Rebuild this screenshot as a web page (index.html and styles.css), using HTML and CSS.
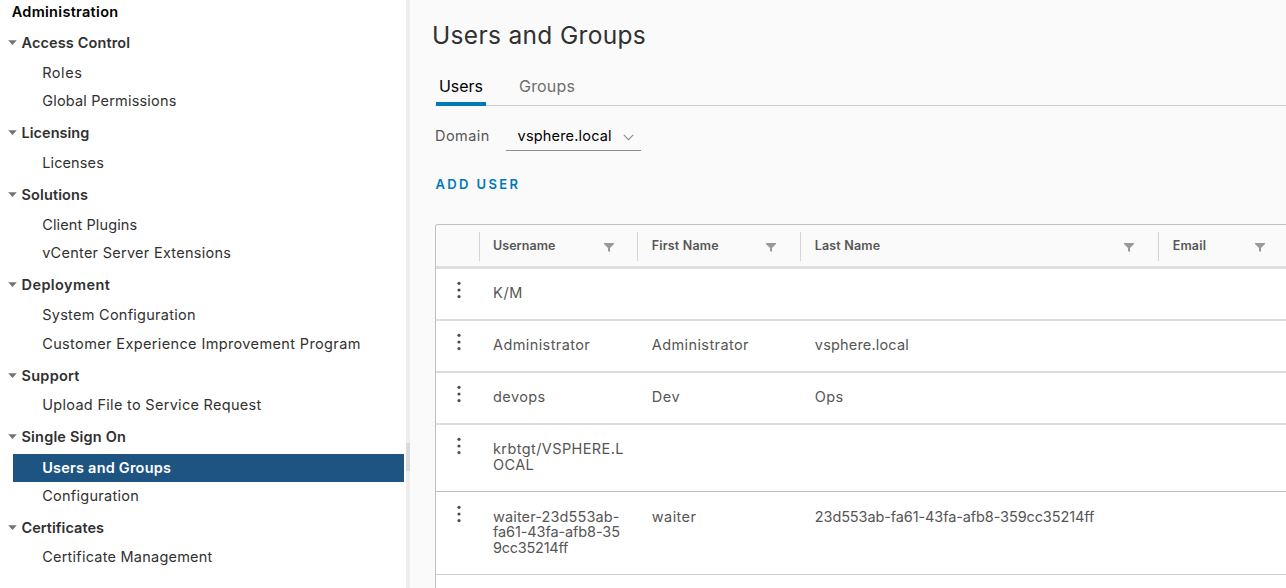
FILE: index.html
```html
<!DOCTYPE html>
<html lang="en">
<head>
<meta charset="utf-8">
<title>Users and Groups</title>
<link rel="stylesheet" href="styles.css">
</head>
<body>
<svg class="sprite" aria-hidden="true">
  <symbol id="caret" viewBox="0 0 9 5"><path d="M0.2 0.3h8.6L4.5 4.9z" fill="#737373"/></symbol>
  <symbol id="filter" viewBox="0 0 10 9"><path d="M0 0h10v1L6 5v4L4 8V5L0 1z" fill="#999"/></symbol>
  <symbol id="dots" viewBox="0 0 4 18"><g fill="#4d4d4d"><circle cx="2" cy="2.3" r="1.6"/><circle cx="2" cy="9" r="1.6"/><circle cx="2" cy="15.6" r="1.6"/></g></symbol>
</svg>
<div class="app">
  <nav class="sidebar">
    <div class="side-title">Administration</div>
    <div class="group"><svg class="caret"><use href="#caret"/></svg><span class="ls-12">Access Control</span></div>
    <a class="item ls-55">Roles</a>
    <a class="item ls-18">Global Permissions</a>
    <div class="group"><svg class="caret"><use href="#caret"/></svg><span class="ls-0">Licensing</span></div>
    <a class="item ls-12">Licenses</a>
    <div class="group"><svg class="caret"><use href="#caret"/></svg><span class="ls-12">Solutions</span></div>
    <a class="item ls-12">Client Plugins</a>
    <a class="item">vCenter Server Extensions</a>
    <div class="group"><svg class="caret"><use href="#caret"/></svg><span class="ls-42">Deployment</span></div>
    <a class="item">System Configuration</a>
    <a class="item ls-37">Customer Experience Improvement Program</a>
    <div class="group"><svg class="caret"><use href="#caret"/></svg><span>Support</span></div>
    <a class="item ls-30">Upload File to Service Request</a>
    <div class="group"><svg class="caret"><use href="#caret"/></svg><span class="ls-18">Single Sign On</span></div>
    <a class="item selected">Users and Groups</a>
    <a class="item">Configuration</a>
    <div class="group"><svg class="caret"><use href="#caret"/></svg><span class="ls-0">Certificates</span></div>
    <a class="item ls-23">Certificate Management</a>
  </nav>
  <div class="splitter"><div class="handle"></div></div>
  <main class="main">
    <h1 class="title">Users and Groups</h1>
    <div class="tabs"><a class="tab active">Users</a><a class="tab">Groups</a></div>
    <div class="domain">
      <label class="domain-label">Domain</label>
      <div class="select"><span class="value">vsphere.local</span>
        <svg class="chevron" viewBox="0 0 11 7"><path d="M0.8 0.8L5.5 5.6L10.2 0.8" fill="none" stroke="#8c8c8c" stroke-width="1.1"/></svg>
      </div>
    </div>
    <a class="add">ADD USER</a>
    <div class="grid">
      <div class="row head">
        <div></div>
        <div class="th first"><span class="label ls-5">Username</span><svg class="filter"><use href="#filter"/></svg></div>
        <div class="th"><span class="label">First Name</span><svg class="filter"><use href="#filter"/></svg></div>
        <div class="th"><span class="label">Last Name</span><svg class="filter"><use href="#filter"/></svg></div>
        <div class="th email"><span class="label">Email</span><svg class="filter"><use href="#filter"/></svg></div>
      </div>
      <div class="row">
        <svg class="dots"><use href="#dots"/></svg>
        <div class="td user ls-68">K/M</div><div class="td"></div><div class="td"></div><div class="td"></div>
      </div>
      <div class="row">
        <svg class="dots"><use href="#dots"/></svg>
        <div class="td user">Administrator</div><div class="td">Administrator</div><div class="td ls-18">vsphere.local</div><div class="td"></div>
      </div>
      <div class="row">
        <svg class="dots"><use href="#dots"/></svg>
        <div class="td user ls-42">devops</div><div class="td ls-55">Dev</div><div class="td">Ops</div><div class="td"></div>
      </div>
      <div class="row two-line">
        <svg class="dots"><use href="#dots"/></svg>
        <div class="td user">krbtgt/VSPHERE.L<br>OCAL</div><div class="td"></div><div class="td"></div><div class="td"></div>
      </div>
      <div class="row three-line">
        <svg class="dots"><use href="#dots"/></svg>
        <div class="td user"><span class="ls-12">waiter-23d553ab-</span><br><span class="tight">fa61-43fa-afb8-35</span><br><span class="tighter">9cc35214ff</span></div><div class="td ls-42">waiter</div><div class="td tight">23d553ab-fa61-43fa-afb8-359cc35214ff</div><div class="td"></div>
      </div>
      <div class="row last"></div>
    </div>
  </main>
</div>
</body>
</html>
```
FILE: styles.css
```css
* { box-sizing: border-box; }
body { margin: 0; font-family: Inter, "Liberation Sans", sans-serif; font-size: 14.5px; color: #313131; background: #fff; overflow: hidden; }
.sprite { display: block; width: 0; height: 0; }
.app { display: flex; width: 1286px; height: 588px; overflow: hidden; }

.sidebar { width: 406px; flex: none; letter-spacing: 0.27px; white-space: nowrap; }
.side-title { height: 25px; padding: 0 0 2px 11.7px; line-height: 23px; font-weight: 600; letter-spacing: 0.3px; color: #000; }
.group { display: flex; align-items: center; height: 33.1px; padding: 2.2px 0 0 7.5px; font-weight: 600; }
.caret { width: 9px; height: 5px; margin-right: 5px; }
.item { display: block; height: 28.6px; padding: 0.8px 0 0 42.2px; line-height: 28.6px; }
.selected { height: 28px; margin: 1.6px 2px -1px 12.6px; padding: 0 0 0 29.6px; line-height: 28px; background: #1d5481; color: #fff; font-weight: 600; letter-spacing: 0.22px; }

.splitter { width: 4px; flex: none; padding-top: 443px; background: #eee; }
.handle { height: 28px; background: #dadada; }

.main { flex: 1; min-width: 0; padding-left: 25px; background: #fafafa; }
.title { margin: 0; padding: 20px 0 0; margin-left: -3px; font-size: 24.5px; line-height: 30px; font-weight: 400; letter-spacing: 0.33px; color: #313131; }
.tabs { display: flex; gap: 30px; height: 56px; padding: 17px 0 0 1px; border-bottom: 1px solid #ccc; font-size: 16px; }
.tab { height: 39px; padding: 0 3px; line-height: 39px; letter-spacing: 0.19px; color: #6e6e6e; }
.active { width: 50px; letter-spacing: -0.05px; color: #000; border-bottom: 4px solid #0079b8; }
.domain { display: flex; align-items: flex-start; height: 45px; }
.domain-label { width: 71px; padding-top: 16px; line-height: 28px; letter-spacing: 0.45px; color: #565656; }
.select { display: flex; align-items: center; width: 135px; height: 29px; margin-top: 16px; padding-left: 11.6px; border-bottom: 1px solid #8c8c8c; letter-spacing: 0.18px; color: #000; }
.value { padding-bottom: 2px; }
.chevron { width: 11px; height: 7px; margin: 2px 0 0 11.4px; }
.add { display: block; height: 73px; padding: 17.5px 0 0 0.5px; font-size: 13px; line-height: 30px; font-weight: 600; letter-spacing: 2.36px; color: #0079b8; }

.grid { border: 1px solid #c0c0c0; border-width: 1px 0 0 1px; border-radius: 3px 0 0 0; background: #fff; overflow: hidden; }
.row { display: grid; grid-template-columns: 43px 158px 163px 358px 128px; height: 52px; border-bottom: 2px solid #dcdcdc; color: #565656; letter-spacing: 0.4px; }
.head { height: 44px; padding: 7px 0; background: #fafafa; border-bottom: 3px solid #dedede; font-size: 12.5px; font-weight: 600; letter-spacing: 0.18px; }
.th { display: flex; align-items: center; justify-content: space-between; height: 29px; padding: 0 24px 0 13.7px; border-left: 1px solid #d4d4d4; }
.first { padding: 0 23px 0 13px; }
.email { padding-right: 21.5px; }
.label { padding-bottom: 2px; }
.filter { width: 10px; height: 9px; margin-top: 1px; }
.td { padding: 16px 0 0 14.8px; line-height: 15.5px; white-space: nowrap; }
.user { padding-left: 14px; }
.dots { width: 4px; height: 18px; margin: 12.3px 0 0 21px; }
.two-line { height: 67px; border-bottom: 1px solid #bdbdbd; }
.three-line { height: 83px; border-bottom: 1px solid #d0d0d0; }
.three-line .td { padding-top: 16.6px; }
.three-line .dots { margin-top: 13px; }
.last { border: 0; }

.ls-0 { letter-spacing: 0.03px; }
.ls-5 { letter-spacing: 0.05px; }
.ls-12 { letter-spacing: 0.12px; }
.ls-18 { letter-spacing: 0.18px; }
.ls-23 { letter-spacing: 0.23px; }
.ls-30 { letter-spacing: 0.3px; }
.ls-37 { letter-spacing: 0.37px; }
.ls-42 { letter-spacing: 0.42px; }
.ls-55 { letter-spacing: 0.55px; }
.ls-68 { letter-spacing: 0.68px; }
.tight { letter-spacing: -0.11px; }
.tighter { letter-spacing: -0.25px; }
```
